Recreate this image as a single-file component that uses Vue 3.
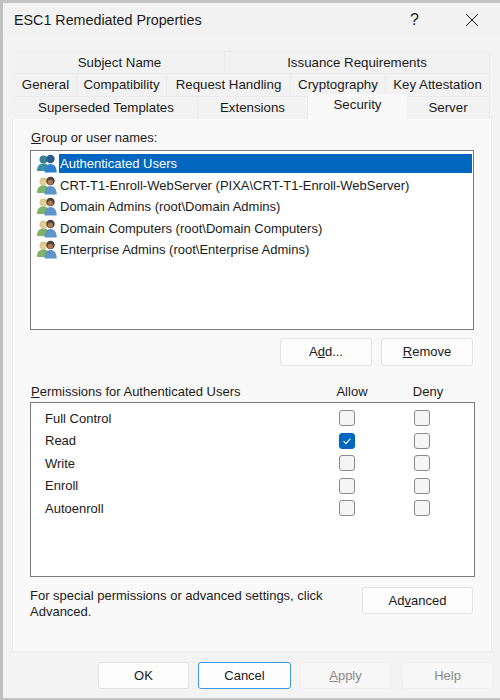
<template>
  <div class="window">
    <div class="title-bar">
      <span class="title">ESC1 Remediated Properties</span>
      <span class="help-btn">?</span>
      <svg class="close-btn" viewBox="0 0 14 14" fill="none" stroke="#1a1a1a" stroke-width="1">
        <path d="M1 1l12 12M13 1L1 13" />
      </svg>
    </div>

    <div class="tabs">
      <div v-for="(row, i) in tabRows" :key="i" :class="['tab-row', 'tab-row-' + i]">
        <div v-for="tab in row" :key="tab" :class="['tab', { active: tab === 'Security' }]">{{ tab }}</div>
      </div>
    </div>

    <div class="panel">
      <div class="label"><u>G</u>roup or user names:</div>
      <div class="user-list">
        <div v-for="(user, i) in users" :key="user" class="user-row">
          <svg class="user-icon" viewBox="0 0 20 19">
            <g v-if="i === 0">
              <circle cx="6.500" cy="5.500" r="4" fill="#3a8198" />
              <path d="M0 17c0-5 2.500-7.400 6.500-7.400s6 2.400 6 7.400z" fill="#3f8fa3" />
              <circle cx="13.500" cy="5" r="4.200" fill="#2b5c8e" />
              <path d="M7.500 18.500c0-5.800 2.500-8.600 6-8.600s6.200 2.800 6.200 8.600z" fill="#2d7fd2" />
            </g>
            <g v-else>
              <circle cx="6.500" cy="5.500" r="4" fill="#d9c78c" />
              <circle cx="6.800" cy="6.200" r="2.500" fill="#e8c9a0" />
              <path d="M0 17c0-5 2.500-7.400 6.500-7.400s6 2.400 6 7.400z" fill="#7db267" />
              <circle cx="13.500" cy="5" r="4.200" fill="#4e4036" />
              <circle cx="13.300" cy="6.200" r="2.600" fill="#a87850" />
              <path d="M7.500 18.500c0-5.800 2.500-8.600 6-8.600s6.200 2.800 6.200 8.600z" fill="#5c94cb" />
            </g>
          </svg>
          <span :class="['user-name', { selected: i === 0 }]">{{ user }}</span>
        </div>
      </div>

      <div class="list-actions">
        <button class="btn">A<u>d</u>d...</button>
        <button class="btn"><u>R</u>emove</button>
      </div>

      <div class="perm-head">
        <span class="perm-title"><u>P</u>ermissions for Authenticated Users</span>
        <span class="perm-col">Allow</span>
        <span class="perm-col">Deny</span>
      </div>
      <div class="perm-box">
        <div v-for="perm in permissions" :key="perm.name" class="perm-row">
          <span class="perm-name">{{ perm.name }}</span>
          <span class="perm-col">
            <span :class="['check', { checked: perm.allow }]">
              <svg v-if="perm.allow" viewBox="0 0 16 16" fill="none" stroke="#fff" stroke-width="1.200">
                <path d="M4 8.200l2.800 2.800 5.200-5.600" />
              </svg>
            </span>
          </span>
          <span class="perm-col"><span class="check"></span></span>
        </div>
      </div>

      <div class="advanced">
        <p class="advanced-text">For special permissions or advanced settings, click Advanced.</p>
        <button class="btn btn-advanced">Ad<u>v</u>anced</button>
      </div>
    </div>

    <div class="footer">
      <button class="btn">OK</button>
      <button class="btn btn-default">Cancel</button>
      <button class="btn btn-disabled"><u>A</u>pply</button>
      <button class="btn btn-disabled">Help</button>
    </div>
  </div>
</template>

<script setup>
const tabRows = [
  ['Subject Name', 'Issuance Requirements'],
  ['General', 'Compatibility', 'Request Handling', 'Cryptography', 'Key Attestation'],
  ['Superseded Templates', 'Extensions', 'Security', 'Server']
]

const users = [
  'Authenticated Users',
  'CRT-T1-Enroll-WebServer (PIXA\\CRT-T1-Enroll-WebServer)',
  'Domain Admins (root\\Domain Admins)',
  'Domain Computers (root\\Domain Computers)',
  'Enterprise Admins (root\\Enterprise Admins)'
]

const permissions = [
  { name: 'Full Control', allow: false },
  { name: 'Read', allow: true },
  { name: 'Write', allow: false },
  { name: 'Enroll', allow: false },
  { name: 'Autoenroll', allow: false }
]
</script>

<style>
html, body {
  margin: 0;
  background: #f3f3f3;
}
</style>

<style scoped>
.window {
  width: 500px;
  height: 700px;
  box-sizing: border-box;
  border-top: 3px solid #c4c4c4;
  border-left: 3px solid #c0c0c0;
  border-bottom: 2px solid #c4c4c4;
  background: #f3f3f3;
  font-family: "Liberation Sans", Arial, sans-serif;
  font-size: 13px;
  color: #1a1a1a;
  overflow: hidden;
}

.title-bar {
  display: flex;
  align-items: center;
  height: 34px;
  padding: 0 0 0 11px;
  background: #f2f2f2;
}

.title {
  flex: 1;
  font-size: 14.300px;
}

.help-btn {
  font-size: 16px;
  margin-right: 46px;
}

.close-btn {
  width: 14px;
  height: 14px;
  margin-right: 21px;
}

.tabs {
  margin: 14px 7px 0 12px;
  font-size: 13.300px;
}

.tab-row {
  display: grid;
  height: 22.300px;
}

.tab-row-0 {
  grid-template-columns: 210px 265px;
}

.tab-row-1 {
  grid-template-columns: 62px 90px 124px 95px 104px;
}

.tab-row-2 {
  grid-template-columns: 183px 110px 99px 83px;
}

.tab {
  display: flex;
  align-items: center;
  justify-content: center;
  box-sizing: border-box;
  border-top: 1px solid #ebebeb;
  border-right: 1px solid #ebebeb;
  background: #f2f2f2;
  white-space: nowrap;
}

.tab.active {
  margin-top: -2px;
  padding-bottom: 3px;
  background: #f9f9f9;
  border: none;
  height: 25px;
}

.panel {
  box-sizing: border-box;
  width: 480px;
  height: 534px;
  margin-left: 9px;
  padding: 12px 17px 0 17px;
  background: #f9f9f9;
  border: 1px solid #ececec;
  border-top: none;
}

.label {
  height: 16px;
  line-height: 16px;
  padding-left: 1px;
}

.user-list {
  box-sizing: border-box;
  height: 180px;
  margin-top: 4px;
  padding: 2px 1px 1px;
  background: #fff;
  border: 1px solid #7a7a7a;
}

.user-row {
  display: flex;
  align-items: center;
  height: 21.500px;
  padding-left: 5px;
}

.user-icon {
  width: 20px;
  height: 19px;
  flex-shrink: 0;
  margin-right: 2px;
}

.user-name {
  flex: 1;
  padding: 2px 0 2px 1px;
  white-space: nowrap;
}

.user-name.selected {
  background: #0067c0;
  color: #fff;
}

.list-actions {
  display: flex;
  justify-content: flex-end;
  gap: 9px;
  margin-top: 8px;
  padding-right: 1px;
}

.btn {
  box-sizing: border-box;
  width: 92px;
  height: 28px;
  padding: 0;
  background: #fdfdfd;
  border: 1px solid #e3e3e3;
  border-radius: 3px;
  font: inherit;
  color: #1a1a1a;
}

.perm-head {
  display: flex;
  align-items: center;
  height: 16px;
  margin-top: 18px;
}

.perm-title {
  width: 284px;
  padding-left: 1px;
  box-sizing: border-box;
}

.perm-col {
  width: 76px;
  display: flex;
  justify-content: center;
  flex-shrink: 0;
}

.perm-box {
  box-sizing: border-box;
  height: 175px;
  width: 445px;
  margin-top: 2px;
  padding-top: 4px;
  background: #fff;
  border: 1px solid #7a7a7a;
}

.perm-row {
  display: flex;
  align-items: center;
  height: 22.500px;
}

.perm-row .perm-col {
  width: 75px;
}

.perm-name {
  width: 278px;
  padding-left: 14px;
  box-sizing: border-box;
}

.check {
  box-sizing: border-box;
  display: block;
  width: 16px;
  height: 16px;
  background: #f5f5f5;
  border: 1px solid #8a8a8a;
  border-radius: 3px;
}

.check.checked {
  background: #0067c0;
  border-color: #0067c0;
}

.check svg {
  display: block;
  width: 14px;
  height: 14px;
}

.advanced {
  display: flex;
  justify-content: space-between;
  align-items: flex-start;
  margin-top: 10px;
}

.advanced-text {
  margin: 0;
  width: 310px;
  line-height: 16.500px;
  padding-top: 1px;
}

.btn-advanced {
  width: 111px;
  height: 27px;
  margin-right: 1px;
}

.footer {
  display: flex;
  gap: 9px;
  margin-top: 10px;
  padding-left: 95px;
}

.footer .btn {
  height: 27px;
  width: 91px;
}

.footer .btn-default {
  width: 93px;
  border: 1px solid #3d97e0;
}

.footer .btn-disabled {
  background: #f7f7f7;
  border-color: #efefef;
  color: #8a8a8a;
}

.footer .btn-disabled:last-child {
  margin-left: 2px;
}
</style>
